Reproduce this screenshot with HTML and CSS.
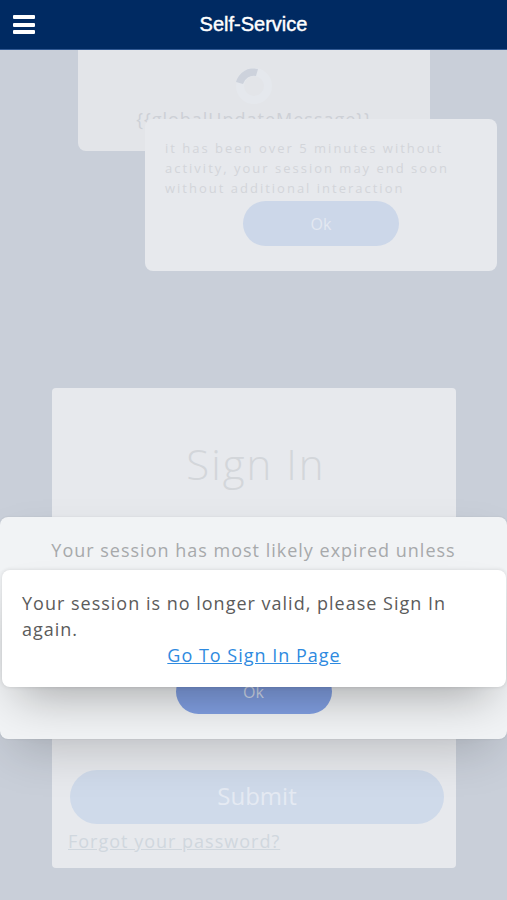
FILE: index.html
```html
<!DOCTYPE html>
<html lang="en">
<head>
<meta charset="utf-8">
<meta name="viewport" content="width=device-width, initial-scale=1">
<title>Self-Service</title>
<link rel="stylesheet" href="styles.css">
</head>
<body>
<header class="topbar">
  <button class="menu" type="button" aria-label="Menu">
    <svg viewBox="0 0 24 20" width="24" height="20" aria-hidden="true"><path d="M2 0h20q1 0 1 1v2q0 1-1 1H2q-1 0-1-1V1q0-1 1-1zM2 8h20q1 0 1 1v2q0 1-1 1H2q-1 0-1-1V9q0-1 1-1zM2 15h20q1 0 1 1v2q0 1-1 1H2q-1 0-1-1v-2q0-1 1-1z" fill="#fff"/></svg>
  </button>
  <h1 class="title">Self-Service</h1>
</header>

<main class="page">
  <form class="signin">
    <h2 class="signin-title">Sign In</h2>
    <div class="signin-foot">
      <button class="submit" type="button">Submit</button>
      <a class="forgot" href="#forgot">Forgot your password?</a>
    </div>
  </form>
</main>

<section class="dialog loader">
  <svg class="spinner" viewBox="0 0 40 40" width="40" height="40" aria-hidden="true">
    <circle cx="20" cy="20" r="14" fill="none" stroke="#e5e8ed" stroke-width="8"/>
    <path d="M2 16A18 18 0 0 1 24 3L22 10A11 11 0 0 0 9 18Z" fill="#cdd2dc"/>
  </svg>
  <p class="loader-text">{{globalUpdateMessage}}</p>
</section>

<section class="dialog idle">
  <p class="idle-text">it has been over 5 minutes without activity, your session may end soon without additional interaction</p>
  <button class="ok" type="button">Ok</button>
</section>

<section class="dialog expired">
  <p class="expired-text">Your session has most likely expired unless</p>
  <button class="ok ok-strong" type="button">Ok</button>
</section>

<section class="dialog invalid" role="alertdialog" aria-labelledby="invalid-text">
  <p class="invalid-text" id="invalid-text">Your session is no longer valid, please Sign In again.</p>
  <a class="go" href="#signin">Go To Sign In Page</a>
</section>
</body>
</html>
```
FILE: styles.css
```css
* { box-sizing: border-box; }

body {
  margin: 0;
  min-height: 100vh;
  position: relative;
  display: flex;
  flex-direction: column;
  overflow-x: hidden;
  background: #c9cfd9;
  font-family: "Open Sans", "Noto Sans", sans-serif;
  font-size: 18px;
  line-height: 26px;
  letter-spacing: 1px;
}

h1, h2, p { margin: 0; }

button {
  border: 0;
  padding: 0;
  font: inherit;
  letter-spacing: inherit;
}

.topbar {
  position: relative;
  z-index: 5;
  display: grid;
  grid-template-columns: 48px 1fr 48px;
  align-items: center;
  height: 50px;
  background: #002a62;
  border-bottom: 1px solid #315993;
}

.menu {
  display: flex;
  justify-content: center;
  background: none;
}

.title {
  padding-bottom: 2px;
  color: #fff;
  font: 20px/46px "Liberation Sans", Arial, sans-serif;
  letter-spacing: 0;
  text-align: center;
  -webkit-text-stroke: thin #fff;
}

.page {
  flex: 1;
  display: flex;
  flex-direction: column;
  justify-content: flex-end;
  padding: 0 51px 32px 52px;
}

.signin {
  display: flex;
  flex-direction: column;
  justify-content: space-between;
  min-height: 480px;
  padding: 46px 12px 14px 16px;
  border-radius: 4px;
  background: #e7e9ed;
}

.signin-title {
  color: #d3d6da;
  font-size: 42px;
  font-weight: 300;
  line-height: 60px;
  letter-spacing: 2px;
  text-align: center;
}

.signin-foot {
  display: flex;
  flex-direction: column;
  align-items: flex-start;
  gap: 4px;
}

.submit {
  align-self: stretch;
  height: 54px;
  margin-left: 2px;
  padding-bottom: 2px;
  border-radius: 27px;
  background: #cfdaea;
  color: #e5eaf3;
  font-size: 24px;
  letter-spacing: 0;
}

.forgot { color: #d0d7de; }

.dialog {
  position: absolute;
  display: flex;
  flex-direction: column;
  align-items: center;
  border-radius: 8px;
}

.loader {
  top: 50px;
  left: 78px;
  right: 77px;
  height: 101px;
  padding-top: 16px;
  border-radius: 0 0 8px 8px;
  background: #e3e5e9;
}

.loader-text {
  color: #cdd0d6;
}

.idle {
  top: 119px;
  right: 10px;
  width: 352px;
  height: 152px;
  padding: 19px 20px;
  background: #e7e9ed;
}

.idle-text {
  align-self: stretch;
  color: #d3d5da;
  font-size: 13px;
  line-height: 20px;
  letter-spacing: 2px;
}

.ok {
  flex: none;
  width: 156px;
  height: 45px;
  margin-top: 3px;
  border-radius: 24px;
  background: #ccd7e9;
  color: #e3e8f1;
  font-size: 16px;
  letter-spacing: 0;
}

.expired {
  top: 517px;
  left: 0;
  right: 0;
  height: 222px;
  justify-content: space-between;
  padding: 20px 20px 25px;
  background: #f1f3f5;
  box-shadow: 0 20px 48px -12px rgba(0, 0, 0, 0.2), 0 0 2px rgba(0, 0, 0, 0.1);
}

.expired-text { color: #a7a9ab; }

.ok-strong {
  background: #819fe2;
  color: #d3dcee;
}

.invalid {
  top: 570px;
  left: 2px;
  right: 1px;
  height: 117px;
  padding: 20px;
  background: #fff;
  box-shadow: 0 24px 48px -16px rgba(0, 0, 0, 0.32), 0 0 4px rgba(0, 0, 0, 0.12);
}

.invalid-text {
  align-self: stretch;
  color: #5b5b5b;
}

.go { color: #2e8ae0; }
```
